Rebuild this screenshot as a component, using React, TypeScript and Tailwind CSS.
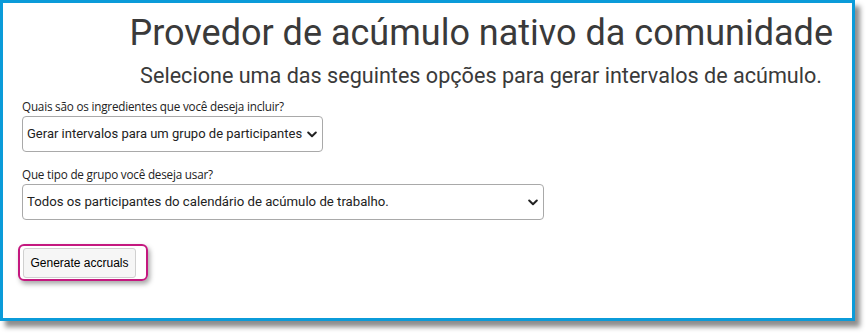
import { useState } from 'react';

const Chevron = () => (
  <svg width="10" height="7" viewBox="0 0 10 7" className="shrink-0">
    <path d="M1.2 1.5 L5 5.2 L8.8 1.5" fill="none" stroke="#222" strokeWidth="2" strokeLinecap="round" strokeLinejoin="round" />
  </svg>
);

export default function App() {
  const [ingredient] = useState('Gerar intervalos para um grupo de participantes');
  const [groupType] = useState('Todos os participantes do calendário de acúmulo de trabalho.');

  return (
    <div className="w-[867px] h-[335px] bg-white font-['Roboto',sans-serif]">
      <div className="w-[855px] h-[321px] border-[3px] border-[#0b9bd9] bg-white shadow-[5px_6px_5px_rgba(0,0,0,0.45)] flex flex-col">
        {/* Header */}
        <div className="flex flex-col items-end">
          <h1 className="mt-[6px] mr-[19px] text-[36px] leading-[48px] text-[#3a3a3a] whitespace-nowrap">
            Provedor de acúmulo nativo da comunidade
          </h1>
          <p className="mt-[6px] mr-[30px] text-[21.6px] leading-[26px] text-[#3a3a3a] whitespace-nowrap">
            Selecione uma das seguintes opções para gerar intervalos de acúmulo.
          </p>
        </div>

        {/* Form */}
        <div className="pl-[19px] mt-[9px] flex flex-col items-start">
          <label className="text-[11.7px] leading-[16px] text-[#222] font-['Open_Sans',sans-serif] tracking-[-0.2px] whitespace-nowrap">
            Quais são os ingredientes que você deseja incluir?
          </label>
          <div className="mt-[2px] w-[301px] h-[36px] border border-[#a9a9a9] rounded-[4px] flex items-center justify-between gap-[3px] pl-[4px] pr-[5px] text-[13px] text-[#222] whitespace-nowrap">
            <span>{ingredient}</span>
            <Chevron />
          </div>

          <label className="mt-[14px] text-[11.7px] leading-[16px] text-[#222] font-['Open_Sans',sans-serif] tracking-[-0.2px] whitespace-nowrap">
            Que tipo de grupo você deseja usar?
          </label>
          <div className="mt-[2px] w-[522px] h-[36px] border border-[#a9a9a9] rounded-[4px] flex items-center justify-between gap-[3px] pl-[4px] pr-[5px] text-[13.2px] text-[#222] whitespace-nowrap">
            <span>{groupType}</span>
            <Chevron />
          </div>

          <div className="mt-[24px] -ml-[4px] pt-[2px] pb-[1px] pl-[3px] pr-[10px] border-[2px] border-[#c4187f] rounded-[6px] shadow-[2px_3px_5px_rgba(0,0,0,0.35)]">
            <button className="h-[30px] w-[113px] bg-[#f6f6f6] border border-[#d0d0d0] rounded-[3px] text-[12px] text-black font-['Liberation_Sans',Arial,sans-serif] whitespace-nowrap">
              Generate accruals
            </button>
          </div>
        </div>
      </div>
    </div>
  );
}
